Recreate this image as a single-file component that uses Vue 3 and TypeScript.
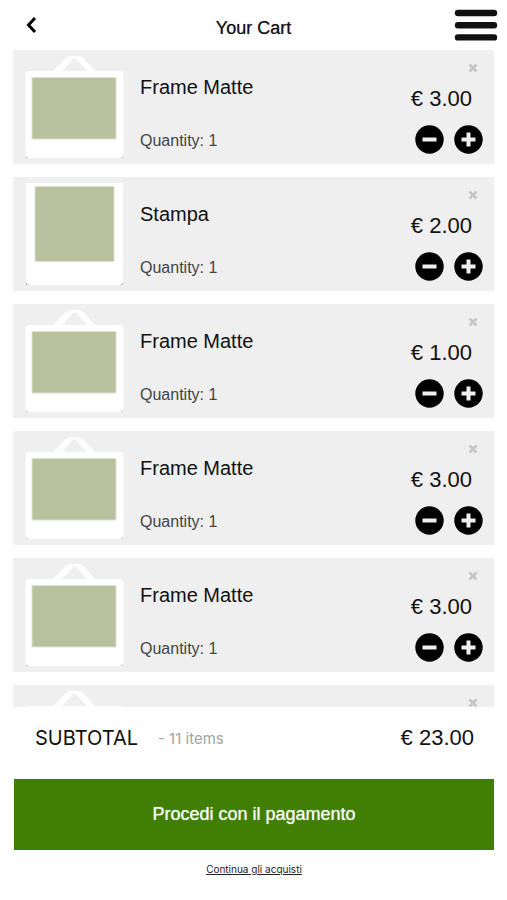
<script setup lang="ts">
import { computed, ref } from 'vue'

interface CartItem {
  id: number
  name: string
  kind: 'frame' | 'print'
  price: number
  quantity: number
}

const items = ref<CartItem[]>([
  { id: 1, name: 'Frame Matte', kind: 'frame', price: 3, quantity: 1 },
  { id: 2, name: 'Stampa', kind: 'print', price: 2, quantity: 1 },
  { id: 3, name: 'Frame Matte', kind: 'frame', price: 1, quantity: 1 },
  { id: 4, name: 'Frame Matte', kind: 'frame', price: 3, quantity: 1 },
  { id: 5, name: 'Frame Matte', kind: 'frame', price: 3, quantity: 1 },
  { id: 6, name: 'Frame Matte', kind: 'frame', price: 11, quantity: 1 },
])

const pendingCount = 5

const count = computed(() => items.value.reduce((n, i) => n + i.quantity, pendingCount))
const subtotal = computed(() => items.value.reduce((n, i) => n + i.price * i.quantity, 0))

const money = (value: number): string => `€ ${value.toFixed(2)}`

function change(item: CartItem, step: number): void {
  item.quantity = Math.max(1, item.quantity + step)
}

function remove(id: number): void {
  items.value = items.value.filter((i) => i.id !== id)
}
</script>

<template>
  <div class="page">
    <header class="header">
      <button class="icon-button back" type="button" aria-label="Back">
        <svg width="12" height="18" viewBox="0 0 12 18">
          <path d="M10 2 3.500 9l6.500 7" fill="none" stroke="#000" stroke-width="3" />
        </svg>
      </button>
      <h1 class="title">Your Cart</h1>
      <button class="icon-button menu" type="button" aria-label="Menu">
        <svg width="44" height="32" viewBox="0 0 44 32">
          <path d="M4 4h36M4 16.200h36M4 28.400h36" stroke="#111" stroke-width="6.400" stroke-linecap="round" />
        </svg>
      </button>
    </header>

    <ul class="list">
      <li v-for="item in items" :key="item.id" class="card">
        <svg v-if="item.kind === 'frame'" class="thumb" width="99" height="104" viewBox="0 0 99 104" aria-hidden="true">
          <path d="M1 100v3h4zM98 100v3h-4z" fill="#b5b5b5" />
          <path
            d="M27 17 41 3q2-2 5-2h7q3 0 5 2l13 14zM37 16h25L51 4q-1.500-1.500-3 0z"
            fill="#fff" fill-rule="evenodd"
          />
          <rect x="0.500" y="16" width="98" height="87" rx="4" fill="#fff" />
          <rect x="7" y="22.500" width="84" height="61.500" fill="#b9c09e" stroke="#dfe3d2" stroke-width="1" />
        </svg>
        <svg v-else class="thumb" width="99" height="104" viewBox="0 0 99 104" aria-hidden="true">
          <path d="M1 99v4h5zM98 99v4h-5z" fill="#b5b5b5" />
          <path d="M1 1h97v98q0 4-4 4H5q-4 0-4-4z" fill="#fff" />
          <rect x="10" y="4.500" width="79" height="75" fill="#b9c09e" stroke="#dfe3d2" stroke-width="1" />
        </svg>

        <div class="details">
          <h2 class="name">{{ item.name }}</h2>
          <p class="quantity">Quantity: {{ item.quantity }}</p>
        </div>

        <div class="side">
          <button class="icon-button remove" type="button" :aria-label="`Remove ${item.name}`" @click="remove(item.id)">
            <svg width="10" height="10" viewBox="0 0 10 10">
              <path d="M1.500 1.500l7 7M8.500 1.500l-7 7" stroke="#c6c6c6" stroke-width="2.600" />
            </svg>
          </button>
          <p class="price">{{ money(item.price) }}</p>
          <div class="steps">
            <button class="icon-button" type="button" aria-label="Decrease quantity" @click="change(item, -1)">
              <svg width="29" height="29" viewBox="0 0 29 29">
                <circle cx="14.500" cy="14.500" r="14.200" />
                <path d="M7.500 14.500h14" stroke="#efefef" stroke-width="4" />
              </svg>
            </button>
            <button class="icon-button" type="button" aria-label="Increase quantity" @click="change(item, 1)">
              <svg width="29" height="29" viewBox="0 0 29 29">
                <circle cx="14.500" cy="14.500" r="14.200" />
                <path d="M7.500 14.500h14M14.500 7.500v14" stroke="#efefef" stroke-width="4" />
              </svg>
            </button>
          </div>
        </div>
      </li>
    </ul>

    <footer class="footer">
      <div class="summary">
        <span class="label">SUBTOTAL</span>
        <span class="count">- {{ count }} items</span>
        <span class="total">{{ money(subtotal) }}</span>
      </div>
      <button class="checkout" type="button">Procedi con il pagamento</button>
      <a class="continue" href="#">Continua gli acquisti</a>
    </footer>
  </div>
</template>

<style>
body {
  background: #fff;
}
</style>

<style scoped>
.page {
  display: flex;
  flex-direction: column;
  height: 100vh;
  color: #111;
  font-family: "Liberation Sans", Arial, sans-serif;
}

.icon-button {
  display: block;
  padding: 0;
  border: 0;
  background: none;
  cursor: pointer;
}

.icon-button svg {
  display: block;
}

.header {
  display: grid;
  grid-template-columns: 1fr auto 1fr;
  align-items: center;
  flex: none;
  height: 50px;
  padding: 0 9px 0 25px;
}

.title {
  margin: 0;
  padding: 6px 16px 0 0;
  font-size: 18px;
  line-height: 20px;
  font-weight: 400;
  text-shadow: 0 0 1px #777;
}

.menu {
  justify-self: end;
}

.list {
  flex: 1;
  min-height: 0;
  margin: 0;
  padding: 0 13px;
  overflow-y: auto;
  scrollbar-width: none;
  list-style: none;
}

.card {
  display: flex;
  height: 114px;
  margin-bottom: 13px;
  background: #efefef;
}

.thumb {
  flex: none;
  margin: 5px 16px 0 12px;
}

.details {
  flex: 1;
  padding-top: 25px;
}

.name {
  margin: 0 0 30px;
  font-size: 20px;
  line-height: 24px;
  font-weight: 400;
}

.quantity {
  margin: 0;
  color: #444;
  font-size: 16px;
  line-height: 24px;
}

.side {
  display: flex;
  flex-direction: column;
  align-items: flex-end;
  padding: 13px 11px 0 0;
}

.remove {
  margin-right: 5px;
}

.price {
  margin: 12px 11px 13px 0;
  font-size: 22px;
  line-height: 27px;
}

.steps {
  display: flex;
  gap: 10px;
}

.footer {
  flex: none;
  padding: 0 13px 23px 14px;
  text-align: center;
}

.summary {
  display: flex;
  align-items: center;
  height: 72px;
  padding: 0 20px 10px 21px;
  box-sizing: border-box;
}

.label {
  font-family: Inter, sans-serif;
  font-size: 20px;
}

.count {
  margin-left: 20px;
  color: #a3a3a3;
  font-family: Inter, sans-serif;
  font-size: 15px;
}

.total {
  margin-left: auto;
  font-size: 22px;
}

.checkout {
  display: block;
  width: 100%;
  height: 71px;
  padding: 0;
  border: 0;
  background: #407f03;
  color: #fff;
  font-family: inherit;
  font-size: 18px;
  text-shadow: 0 0 1px #bfd9a8;
  cursor: pointer;
}

.continue {
  display: inline-block;
  margin-top: 12px;
  color: #222;
  font-family: Inter, sans-serif;
  font-size: 10px;
  line-height: 14px;
}
</style>
